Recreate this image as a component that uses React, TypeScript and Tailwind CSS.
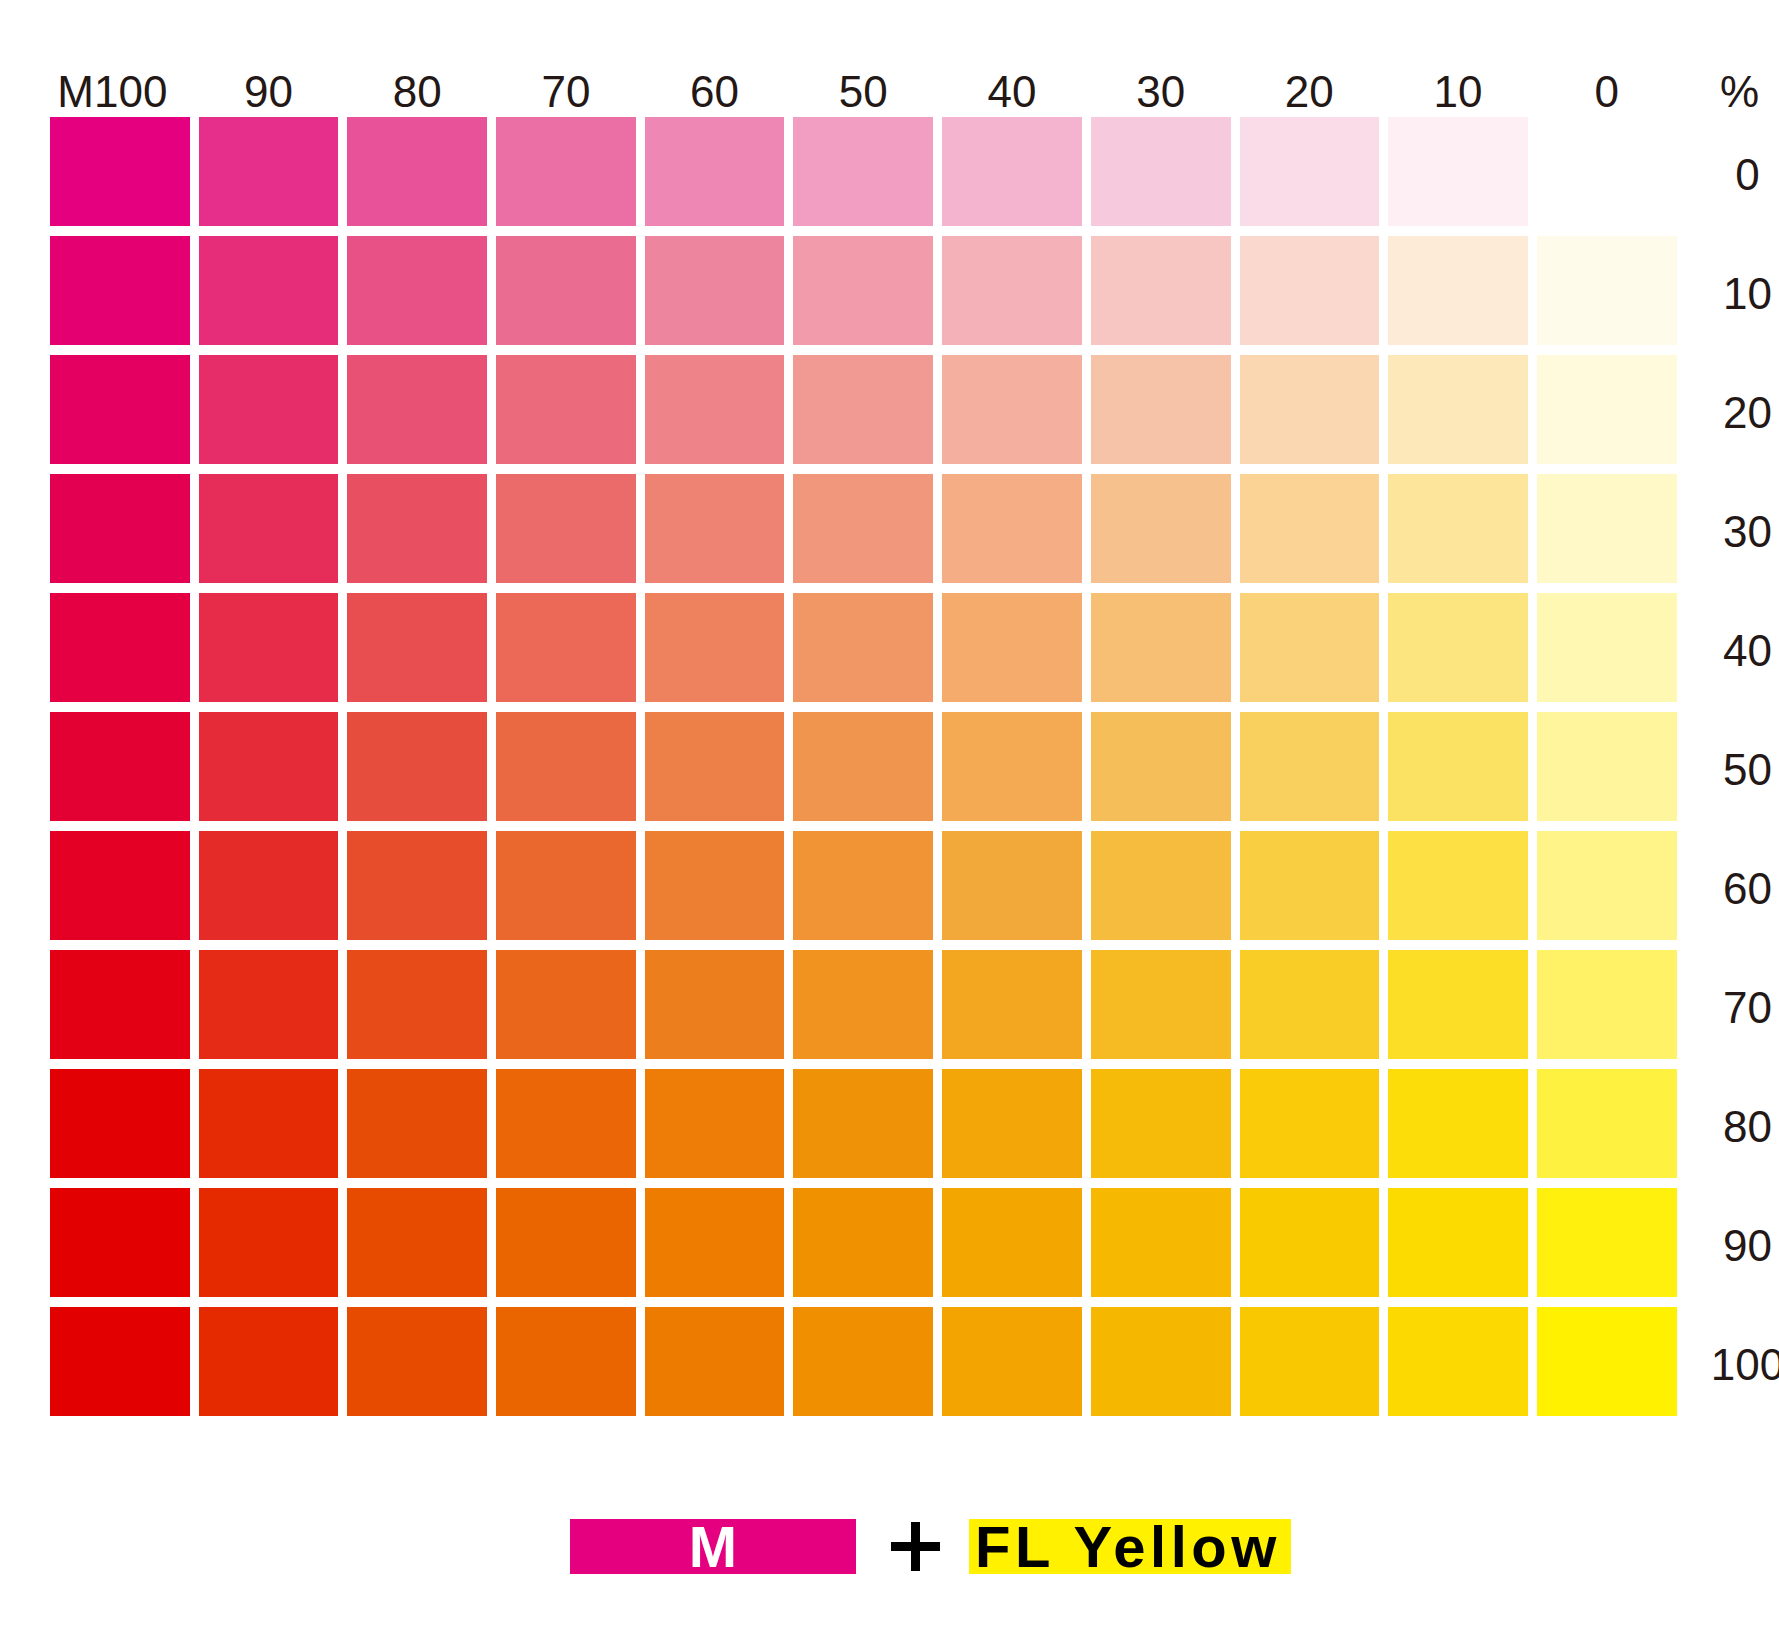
import React from "react";

// Magenta tints on paper, index = M% / 10
const M_TINTS = [
  "#ffffff", "#fdeff4", "#fadce9", "#f7c9dd", "#f4b4d0", "#f19ec2",
  "#ee87b4", "#eb6ea5", "#e85298", "#e62e8b", "#e4007f",
];

// FL Yellow tints on paper, index = Y% / 10
const Y_TINTS = [
  "#ffffff", "#fffbea", "#fffadc", "#fff9c8", "#fff8b3", "#fff59c",
  "#fff487", "#fff266", "#fff13f", "#fff10d", "#fff100",
];

const COLS = [100, 90, 80, 70, 60, 50, 40, 30, 20, 10, 0];
const ROWS = [0, 10, 20, 30, 40, 50, 60, 70, 80, 90, 100];

const hex = (s: string) => [1, 3, 5].map((i) => parseInt(s.slice(i, i + 2), 16));
const toHex = (v: number[]) =>
  "#" + v.map((c) => Math.round(Math.max(0, Math.min(255, c))).toString(16).padStart(2, "0")).join("");

// overprint magenta with yellow
function cellColor(m: number, y: number) {
  if (m === 0) return Y_TINTS[y / 10];
  if (y === 0) return M_TINTS[m / 10];
  const [r, g, b] = hex(M_TINTS[m / 10]);
  const t = y / 100;
  const fR = 1 - 0.005 * t;
  const fG = 1 - 0.09 * Math.pow(t, 0.7);
  const fB = Math.max(0, 1 - 1.2 * t);
  return toHex([r * fR, g * fG, b * fB]);
}

export default function App() {
  return (
    <div className="w-[1779px] h-[1652px] bg-white overflow-hidden pl-[50px] pt-[70px] font-['Liberation_Sans',Arial,sans-serif] text-[#231815]">
      {/* Column header */}
      <div className="grid grid-cols-[repeat(11,139.7px)_124px] gap-x-[9px] h-[44px] mb-[3px] text-[44px] leading-none">
        {COLS.map((c) => (
          <div key={c} className={`text-center whitespace-nowrap ${c === 100 ? "pr-[15px]" : ""}`}>
            {c === 100 ? "M100" : c}
          </div>
        ))}
        <div className="text-center pr-[16px]">%</div>
      </div>

      {/* Swatch grid */}
      <div className="grid grid-cols-[repeat(11,139.7px)_124px] auto-rows-[109px] gap-x-[9px] gap-y-[10px]">
        {ROWS.map((y) => (
          <React.Fragment key={y}>
            {COLS.map((m) => (
              <div key={m} style={{ backgroundColor: cellColor(m, y) }} />
            ))}
            <div className="flex items-center justify-center pt-[7px] text-[44px] leading-none whitespace-nowrap">
              {y}
            </div>
          </React.Fragment>
        ))}
      </div>

      {/* Legend */}
      <div className="flex items-center ml-[520px] mt-[103px]">
        <div className="w-[286px] h-[55px] bg-[#e4007f] flex items-center justify-center text-white font-bold text-[58px] leading-none">
          M
        </div>
        <svg className="ml-[35px]" width="49" height="49" viewBox="0 0 49 49">
          <rect x="20" y="0" width="9" height="49" fill="#000" />
          <rect x="0" y="20" width="49" height="9" fill="#000" />
        </svg>
        <div className="ml-[29px] w-[322px] h-[55px] bg-[#fff100] flex items-center pl-[6px] text-black font-bold text-[58px] leading-none tracking-[4.5px] whitespace-nowrap">
          FL Yellow
        </div>
      </div>
    </div>
  );
}
